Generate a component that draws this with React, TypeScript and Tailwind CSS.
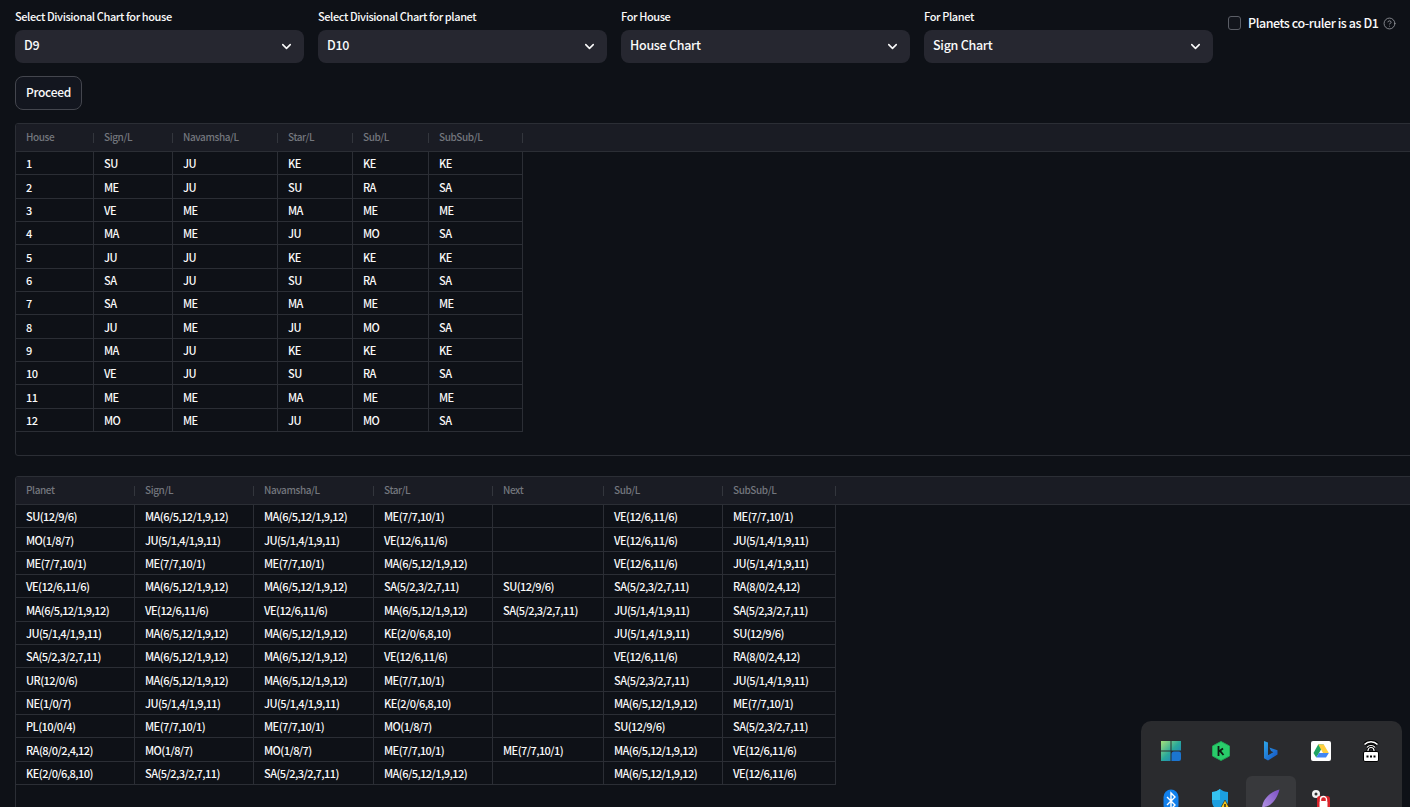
import React from "react";
import { ChevronDown, CircleHelp } from "lucide-react";

const font = "font-['Noto_Sans_CJK_SC','Noto_Sans',sans-serif]";

const houseHead = ["House", "Sign/L", "Navamsha/L", "Star/L", "Sub/L", "SubSub/L"];
const houseRows = [
  ["1", "SU", "JU", "KE", "KE", "KE"],
  ["2", "ME", "JU", "SU", "RA", "SA"],
  ["3", "VE", "ME", "MA", "ME", "ME"],
  ["4", "MA", "ME", "JU", "MO", "SA"],
  ["5", "JU", "JU", "KE", "KE", "KE"],
  ["6", "SA", "JU", "SU", "RA", "SA"],
  ["7", "SA", "ME", "MA", "ME", "ME"],
  ["8", "JU", "ME", "JU", "MO", "SA"],
  ["9", "MA", "JU", "KE", "KE", "KE"],
  ["10", "VE", "JU", "SU", "RA", "SA"],
  ["11", "ME", "ME", "MA", "ME", "ME"],
  ["12", "MO", "ME", "JU", "MO", "SA"],
];

const MA = "MA(6/5,12/1,9,12)";
const JU = "JU(5/1,4/1,9,11)";
const ME = "ME(7/7,10/1)";
const VE = "VE(12/6,11/6)";
const SA = "SA(5/2,3/2,7,11)";
const SU = "SU(12/9/6)";
const RA = "RA(8/0/2,4,12)";
const KE = "KE(2/0/6,8,10)";
const MO = "MO(1/8/7)";

const planetHead = ["Planet", "Sign/L", "Navamsha/L", "Star/L", "Next", "Sub/L", "SubSub/L"];
const planetRows = [
  [SU, MA, MA, ME, "", VE, ME],
  [MO, JU, JU, VE, "", VE, JU],
  [ME, ME, ME, MA, "", VE, JU],
  [VE, MA, MA, SA, SU, SA, RA],
  [MA, VE, VE, MA, SA, JU, SA],
  [JU, MA, MA, KE, "", JU, SU],
  [SA, MA, MA, VE, "", VE, RA],
  ["UR(12/0/6)", MA, MA, ME, "", SA, JU],
  ["NE(1/0/7)", JU, JU, KE, "", MA, ME],
  ["PL(10/0/4)", ME, ME, MO, "", SU, SA],
  [RA, MO, MO, ME, ME, MA, VE],
  [KE, SA, SA, MA, "", MA, VE],
];

function Select({ label, value }: { label: string; value: string }) {
  return (
    <div className="flex w-[289px] flex-none flex-col">
      <div className="flex h-[30px] items-start whitespace-nowrap pt-[7px] text-[11px] font-medium leading-[18px] tracking-[-0.4px] text-[#fafafa]">
        {label}
      </div>
      <div className="flex h-[33px] items-center justify-between rounded-lg bg-[#262730] pl-[9px] pr-[10px] text-[12.5px] font-medium tracking-[-0.28px] text-[#fafafa]">
        <span className="-mt-[2px]">{value}</span>
        <ChevronDown size={15} strokeWidth={2.5} className="text-[#fafafa]" />
      </div>
    </div>
  );
}

function DataTable({
  head,
  rows,
  cols,
  height,
}: {
  head: string[];
  rows: string[][];
  cols: string;
  height: string;
}) {
  return (
    <div className={`w-[1410px] overflow-hidden rounded-[3px] border border-[#2b2e35] bg-[#0e1117] ${height}`}>
      <div className={`grid h-[28px] border-b border-[#2b2e35] bg-[#1a1c24] ${cols}`}>
        {head.map((h) => (
          <div
            key={h}
            className="relative flex items-center pb-[2px] pl-[10px] text-[10px] font-medium tracking-[-0.4px] text-[#73767d]"
          >
            {h}
            <span className="absolute right-0 top-[9px] h-[10px] w-px bg-[#33363d]" />
          </div>
        ))}
      </div>
      {rows.map((r, i) => (
        <div key={i} className={`grid h-[23.33px] w-max ${cols}`}>
          {r.map((c, j) => (
            <div
              key={j}
              className="flex items-center border-b border-r border-[#2b2e35] pl-[10px] pt-[1px] text-[11px] font-medium tracking-[-0.55px] text-[#fafafa]"
            >
              {c}
            </div>
          ))}
        </div>
      ))}
    </div>
  );
}

function TrayCell({ children, active }: { children: React.ReactNode; active?: boolean }) {
  return (
    <div className={`flex h-[50px] w-[50px] items-center justify-center rounded-md ${active ? "bg-[#38393c]" : ""}`}>
      {children}
    </div>
  );
}

function Tray() {
  return (
    <div className="absolute left-[1141px] top-[721px] grid h-[120px] w-[261px] grid-cols-[repeat(5,50px)] content-start rounded-[10px] bg-[#2a2b2e] pl-[5px] pt-[5px]">
      <TrayCell>
        <svg width="20" height="20" viewBox="0 0 20 20">
          <defs>
            <linearGradient id="t1" x1="0" y1="0" x2="1" y2="1">
              <stop offset="0" stopColor="#a5e07a" />
              <stop offset="0.5" stopColor="#2aa89a" />
              <stop offset="1" stopColor="#1a6fd0" />
            </linearGradient>
          </defs>
          <path d="M0 0h9.500v9.500H0zM10.500 0H20v9.500h-9.500zM0 10.500h9.500V20H0z" fill="url(#t1)" />
          <path d="M13 10.500h5a2 2 0 0 1 2 2V18a2 2 0 0 1-2 2h-7.500v-7a2.500 2.500 0 0 1 2.500-2.500z" fill="#1b75d0" />
        </svg>
      </TrayCell>
      <TrayCell>
        <svg width="18" height="20" viewBox="0 0 18 20">
          <path d="M9 0.500 17.500 5v10L9 19.500.5 15V5z" fill="#29cc6a" stroke="#1fa956" />
          <path d="M6.500 5v10M6.500 10.800 11 7.500M8 9.800 11.500 14" stroke="#0d1b12" strokeWidth="1.800" fill="none" />
        </svg>
      </TrayCell>
      <TrayCell>
        <svg width="14" height="20" viewBox="0 0 14 20">
          <defs>
            <linearGradient id="b1" x1="0" y1="0" x2="1" y2="1">
              <stop offset="0" stopColor="#2ea6e8" />
              <stop offset="1" stopColor="#1452c4" />
            </linearGradient>
          </defs>
          <path d="M0 0l4 1.400v12.800l5.400-3-2.400-1.200L5.500 6.500 13.500 9.300v4.200L4 19.600 0 17.200z" fill="url(#b1)" />
        </svg>
      </TrayCell>
      <TrayCell>
        <svg width="20" height="20" viewBox="0 0 20 20">
          <rect width="20" height="20" rx="2" fill="#ffffff" />
          <path d="M7.200 3.500h5.600l-4.700 8.500-2.900 4.500-2.700-4.500z" fill="#1fa463" />
          <path d="M12.800 3.500l5 8.500H12L7.200 3.500z" fill="#ffcf3f" />
          <path d="M8 12h9.800l-2.800 4.500H5.200z" fill="#4285f4" />
        </svg>
      </TrayCell>
      <TrayCell>
        <svg width="18" height="22" viewBox="0 0 18 22">
          <path d="M2.500 4.500a9 9 0 0 1 13 0M5 7.500a5.500 5.500 0 0 1 8 0" stroke="#000" strokeWidth="3.400" fill="none" />
          <path d="M2.500 4.500a9 9 0 0 1 13 0M5 7.500a5.500 5.500 0 0 1 8 0" stroke="#fff" strokeWidth="1.500" fill="none" />
          <path d="M6 12V10.500a3 3 0 0 1 6 0V12" stroke="#000" strokeWidth="3" fill="none" />
          <path d="M6 12V10.500a3 3 0 0 1 6 0V12" stroke="#fff" strokeWidth="1.200" fill="none" />
          <rect x="1.500" y="11.500" width="15" height="10" rx="1.500" fill="#fff" stroke="#000" />
          <path d="M4.500 16.500h2M8 16.500h2M11.500 16.500h2" stroke="#000" strokeWidth="1.800" />
        </svg>
      </TrayCell>
      <TrayCell>
        <svg width="16" height="24" viewBox="0 0 16 24">
          <rect x="0.500" y="0.500" width="15" height="23" rx="7.500" fill="#1180ec" />
          <path d="M4 8l8 8-4 4V4l4 4-8 8" stroke="#fff" strokeWidth="1.400" fill="none" />
        </svg>
      </TrayCell>
      <TrayCell>
        <svg width="20" height="24" viewBox="0 0 20 24">
          <path d="M9 0c2.500 2 5 3 8 3v9c0 5-3.500 8.500-8 11-4.500-2.500-8-6-8-11V3c3 0 5.500-1 8-3z" fill="#1c9fe0" />
          <path d="M1 3c3 0 5.500-1 8-3v11H1z" fill="#35c3f0" />
          <path d="M14 11l6 11H8z" fill="#f8c81c" stroke="#1d1d1d" strokeWidth="0.600" />
          <path d="M14 15v3.500M14 19.500v1" stroke="#111" strokeWidth="1.300" />
        </svg>
      </TrayCell>
      <TrayCell active>
        <svg width="20" height="24" viewBox="0 0 20 24">
          <defs>
            <linearGradient id="f1" x1="1" y1="0" x2="0" y2="1">
              <stop offset="0" stopColor="#7c4fc4" />
              <stop offset="1" stopColor="#b79ae6" />
            </linearGradient>
          </defs>
          <path d="M18.500 0.500C11 2.500 3.500 8 1.500 16c-.6 2.600-.5 4.500-.5 7l1.200-.2c.4-2 .8-3.400 1.600-5 5-1 11.500-5 14.700-17.300z" fill="url(#f1)" />
        </svg>
      </TrayCell>
      <TrayCell>
        <svg width="20" height="24" viewBox="0 0 20 24">
          <circle cx="5" cy="5" r="4" fill="#f2f2f2" />
          <circle cx="5" cy="5" r="1.500" fill="#333" />
          <path d="M7 8l4 6" stroke="#f2f2f2" strokeWidth="2" />
          <rect x="6" y="7" width="13" height="16" rx="3" fill="#d8232a" />
          <path d="M9.500 12v-1.500a3 3 0 0 1 6 0V12" stroke="#fff" strokeWidth="1.400" fill="none" />
          <rect x="8.500" y="12" width="8" height="7" rx="1" fill="#fff" />
        </svg>
      </TrayCell>
    </div>
  );
}

export default function App() {
  return (
    <div className={`relative h-[807px] w-[1410px] overflow-hidden bg-[#0e1117] pl-[15px] ${font}`}>
      <div className="flex gap-[14px]">
        <Select label="Select Divisional Chart for house" value="D9" />
        <Select label="Select Divisional Chart for planet" value="D10" />
        <Select label="For House" value="House Chart" />
        <Select label="For Planet" value="Sign Chart" />
        <label className="ml-px mt-[14px] flex h-[18px] items-center whitespace-nowrap text-[12.5px] font-medium tracking-[-0.45px] text-[#fafafa]">
          <span className="mr-[7px] h-[14px] w-[13px] rounded-[3px] border border-[#5b5e66] bg-[#12151c]" />
          Planets co-ruler is as D1
          <CircleHelp size={13} strokeWidth={1.5} className="ml-[5px] text-[#9a9da3]" />
        </label>
      </div>
      <button className="mt-[13px] flex h-[34px] w-[67px] items-center justify-center rounded-lg border border-[#44464e] bg-[#13161f] pb-[2px] text-[12px] font-medium tracking-[-0.3px] text-[#fafafa]">
        Proceed
      </button>
      <div className="mt-[13px]">
        <DataTable
          head={houseHead}
          rows={houseRows}
          cols="grid-cols-[78px_79px_105px_75px_76px_94px]"
          height="h-[333px]"
        />
      </div>
      <div className="mt-[20px]">
        <DataTable
          head={planetHead}
          rows={planetRows}
          cols="grid-cols-[119px_119px_120px_119px_111px_119px_113px]"
          height="h-[360px]"
        />
      </div>
      <Tray />
    </div>
  );
}
